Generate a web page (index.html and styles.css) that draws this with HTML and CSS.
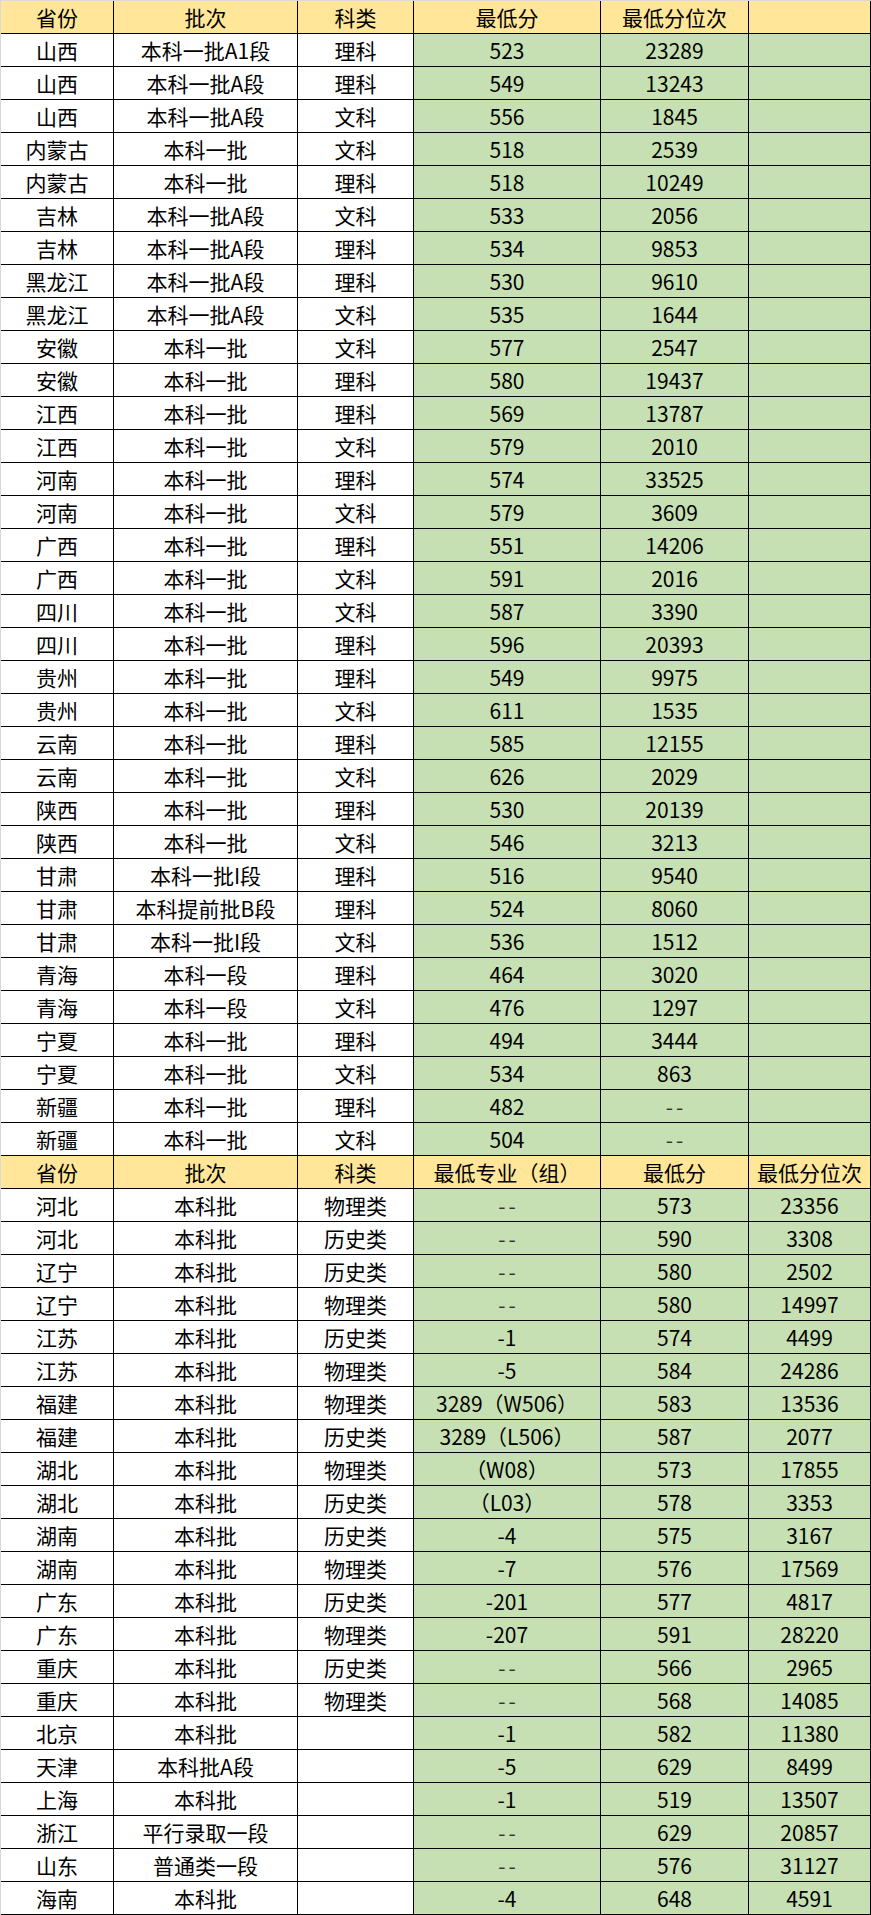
FILE: index.html
```html
<!DOCTYPE html>
<html lang="zh-CN">
<head>
<meta charset="utf-8">
<title>录取分数</title>
<link rel="stylesheet" href="styles.css">
</head>
<body>
<div class="sheet">
  <div class="row head"><div>省份</div><div>批次</div><div>科类</div><div>最低分</div><div>最低分位次</div><div></div></div>
  <div class="row"><div>山西</div><div>本科一批A1段</div><div>理科</div><div class="g">523</div><div class="g">23289</div><div class="g"></div></div>
  <div class="row"><div>山西</div><div>本科一批A段</div><div>理科</div><div class="g">549</div><div class="g">13243</div><div class="g"></div></div>
  <div class="row"><div>山西</div><div>本科一批A段</div><div>文科</div><div class="g">556</div><div class="g">1845</div><div class="g"></div></div>
  <div class="row"><div>内蒙古</div><div>本科一批</div><div>文科</div><div class="g">518</div><div class="g">2539</div><div class="g"></div></div>
  <div class="row"><div>内蒙古</div><div>本科一批</div><div>理科</div><div class="g">518</div><div class="g">10249</div><div class="g"></div></div>
  <div class="row"><div>吉林</div><div>本科一批A段</div><div>文科</div><div class="g">533</div><div class="g">2056</div><div class="g"></div></div>
  <div class="row"><div>吉林</div><div>本科一批A段</div><div>理科</div><div class="g">534</div><div class="g">9853</div><div class="g"></div></div>
  <div class="row"><div>黑龙江</div><div>本科一批A段</div><div>理科</div><div class="g">530</div><div class="g">9610</div><div class="g"></div></div>
  <div class="row"><div>黑龙江</div><div>本科一批A段</div><div>文科</div><div class="g">535</div><div class="g">1644</div><div class="g"></div></div>
  <div class="row"><div>安徽</div><div>本科一批</div><div>文科</div><div class="g">577</div><div class="g">2547</div><div class="g"></div></div>
  <div class="row"><div>安徽</div><div>本科一批</div><div>理科</div><div class="g">580</div><div class="g">19437</div><div class="g"></div></div>
  <div class="row"><div>江西</div><div>本科一批</div><div>理科</div><div class="g">569</div><div class="g">13787</div><div class="g"></div></div>
  <div class="row"><div>江西</div><div>本科一批</div><div>文科</div><div class="g">579</div><div class="g">2010</div><div class="g"></div></div>
  <div class="row"><div>河南</div><div>本科一批</div><div>理科</div><div class="g">574</div><div class="g">33525</div><div class="g"></div></div>
  <div class="row"><div>河南</div><div>本科一批</div><div>文科</div><div class="g">579</div><div class="g">3609</div><div class="g"></div></div>
  <div class="row"><div>广西</div><div>本科一批</div><div>理科</div><div class="g">551</div><div class="g">14206</div><div class="g"></div></div>
  <div class="row"><div>广西</div><div>本科一批</div><div>文科</div><div class="g">591</div><div class="g">2016</div><div class="g"></div></div>
  <div class="row"><div>四川</div><div>本科一批</div><div>文科</div><div class="g">587</div><div class="g">3390</div><div class="g"></div></div>
  <div class="row"><div>四川</div><div>本科一批</div><div>理科</div><div class="g">596</div><div class="g">20393</div><div class="g"></div></div>
  <div class="row"><div>贵州</div><div>本科一批</div><div>理科</div><div class="g">549</div><div class="g">9975</div><div class="g"></div></div>
  <div class="row"><div>贵州</div><div>本科一批</div><div>文科</div><div class="g">611</div><div class="g">1535</div><div class="g"></div></div>
  <div class="row"><div>云南</div><div>本科一批</div><div>理科</div><div class="g">585</div><div class="g">12155</div><div class="g"></div></div>
  <div class="row"><div>云南</div><div>本科一批</div><div>文科</div><div class="g">626</div><div class="g">2029</div><div class="g"></div></div>
  <div class="row"><div>陕西</div><div>本科一批</div><div>理科</div><div class="g">530</div><div class="g">20139</div><div class="g"></div></div>
  <div class="row"><div>陕西</div><div>本科一批</div><div>文科</div><div class="g">546</div><div class="g">3213</div><div class="g"></div></div>
  <div class="row"><div>甘肃</div><div>本科一批I段</div><div>理科</div><div class="g">516</div><div class="g">9540</div><div class="g"></div></div>
  <div class="row"><div>甘肃</div><div>本科提前批B段</div><div>理科</div><div class="g">524</div><div class="g">8060</div><div class="g"></div></div>
  <div class="row"><div>甘肃</div><div>本科一批I段</div><div>文科</div><div class="g">536</div><div class="g">1512</div><div class="g"></div></div>
  <div class="row"><div>青海</div><div>本科一段</div><div>理科</div><div class="g">464</div><div class="g">3020</div><div class="g"></div></div>
  <div class="row"><div>青海</div><div>本科一段</div><div>文科</div><div class="g">476</div><div class="g">1297</div><div class="g"></div></div>
  <div class="row"><div>宁夏</div><div>本科一批</div><div>理科</div><div class="g">494</div><div class="g">3444</div><div class="g"></div></div>
  <div class="row"><div>宁夏</div><div>本科一批</div><div>文科</div><div class="g">534</div><div class="g">863</div><div class="g"></div></div>
  <div class="row"><div>新疆</div><div>本科一批</div><div>理科</div><div class="g">482</div><div class="g dash">--</div><div class="g"></div></div>
  <div class="row"><div>新疆</div><div>本科一批</div><div>文科</div><div class="g">504</div><div class="g dash">--</div><div class="g"></div></div>
  <div class="row head"><div>省份</div><div>批次</div><div>科类</div><div>最低专业（组）</div><div>最低分</div><div>最低分位次</div></div>
  <div class="row"><div>河北</div><div>本科批</div><div>物理类</div><div class="g dash">--</div><div class="g">573</div><div class="g">23356</div></div>
  <div class="row"><div>河北</div><div>本科批</div><div>历史类</div><div class="g dash">--</div><div class="g">590</div><div class="g">3308</div></div>
  <div class="row"><div>辽宁</div><div>本科批</div><div>历史类</div><div class="g dash">--</div><div class="g">580</div><div class="g">2502</div></div>
  <div class="row"><div>辽宁</div><div>本科批</div><div>物理类</div><div class="g dash">--</div><div class="g">580</div><div class="g">14997</div></div>
  <div class="row"><div>江苏</div><div>本科批</div><div>历史类</div><div class="g">-1</div><div class="g">574</div><div class="g">4499</div></div>
  <div class="row"><div>江苏</div><div>本科批</div><div>物理类</div><div class="g">-5</div><div class="g">584</div><div class="g">24286</div></div>
  <div class="row"><div>福建</div><div>本科批</div><div>物理类</div><div class="g">3289（W506）</div><div class="g">583</div><div class="g">13536</div></div>
  <div class="row"><div>福建</div><div>本科批</div><div>历史类</div><div class="g">3289（L506）</div><div class="g">587</div><div class="g">2077</div></div>
  <div class="row"><div>湖北</div><div>本科批</div><div>物理类</div><div class="g">（W08）</div><div class="g">573</div><div class="g">17855</div></div>
  <div class="row"><div>湖北</div><div>本科批</div><div>历史类</div><div class="g">（L03）</div><div class="g">578</div><div class="g">3353</div></div>
  <div class="row"><div>湖南</div><div>本科批</div><div>历史类</div><div class="g">-4</div><div class="g">575</div><div class="g">3167</div></div>
  <div class="row"><div>湖南</div><div>本科批</div><div>物理类</div><div class="g">-7</div><div class="g">576</div><div class="g">17569</div></div>
  <div class="row"><div>广东</div><div>本科批</div><div>历史类</div><div class="g">-201</div><div class="g">577</div><div class="g">4817</div></div>
  <div class="row"><div>广东</div><div>本科批</div><div>物理类</div><div class="g">-207</div><div class="g">591</div><div class="g">28220</div></div>
  <div class="row"><div>重庆</div><div>本科批</div><div>历史类</div><div class="g dash">--</div><div class="g">566</div><div class="g">2965</div></div>
  <div class="row"><div>重庆</div><div>本科批</div><div>物理类</div><div class="g dash">--</div><div class="g">568</div><div class="g">14085</div></div>
  <div class="row"><div>北京</div><div>本科批</div><div></div><div class="g">-1</div><div class="g">582</div><div class="g">11380</div></div>
  <div class="row"><div>天津</div><div>本科批A段</div><div></div><div class="g">-5</div><div class="g">629</div><div class="g">8499</div></div>
  <div class="row"><div>上海</div><div>本科批</div><div></div><div class="g">-1</div><div class="g">519</div><div class="g">13507</div></div>
  <div class="row"><div>浙江</div><div>平行录取一段</div><div></div><div class="g dash">--</div><div class="g">629</div><div class="g">20857</div></div>
  <div class="row"><div>山东</div><div>普通类一段</div><div></div><div class="g dash">--</div><div class="g">576</div><div class="g">31127</div></div>
  <div class="row"><div>海南</div><div>本科批</div><div></div><div class="g">-4</div><div class="g">648</div><div class="g">4591</div></div>
</div>
</body>
</html>
```

FILE: styles.css
```css
html, body {
  margin: 0;
  padding: 0;
  background: #ffffff;
}

.sheet {
  width: 870px;
  border-top: 1px solid #d9d9d9;
  border-left: 1px solid #d9d9d9;
  font-family: "Noto Sans CJK SC", "Microsoft YaHei", sans-serif;
  font-size: 21px;
  color: #000000;
}

.row {
  display: grid;
  grid-template-columns: 113px 184px 116px 187px 148px 122px;
  height: 33px;
}

.row > div {
  box-sizing: border-box;
  height: 33px;
  border-right: 1px solid #000000;
  border-bottom: 1px solid #000000;
  display: flex;
  align-items: center;
  justify-content: center;
  white-space: nowrap;
  background: #ffffff;
  line-height: 1;
  padding-top: 1px;
}

.row.head > div {
  background: #ffe699;
}

.row > div.g {
  background: #c6e0b4;
}

.row > div.dash {
  letter-spacing: 3px;
  padding-left: 3px;
  color: #333333;
}
```
